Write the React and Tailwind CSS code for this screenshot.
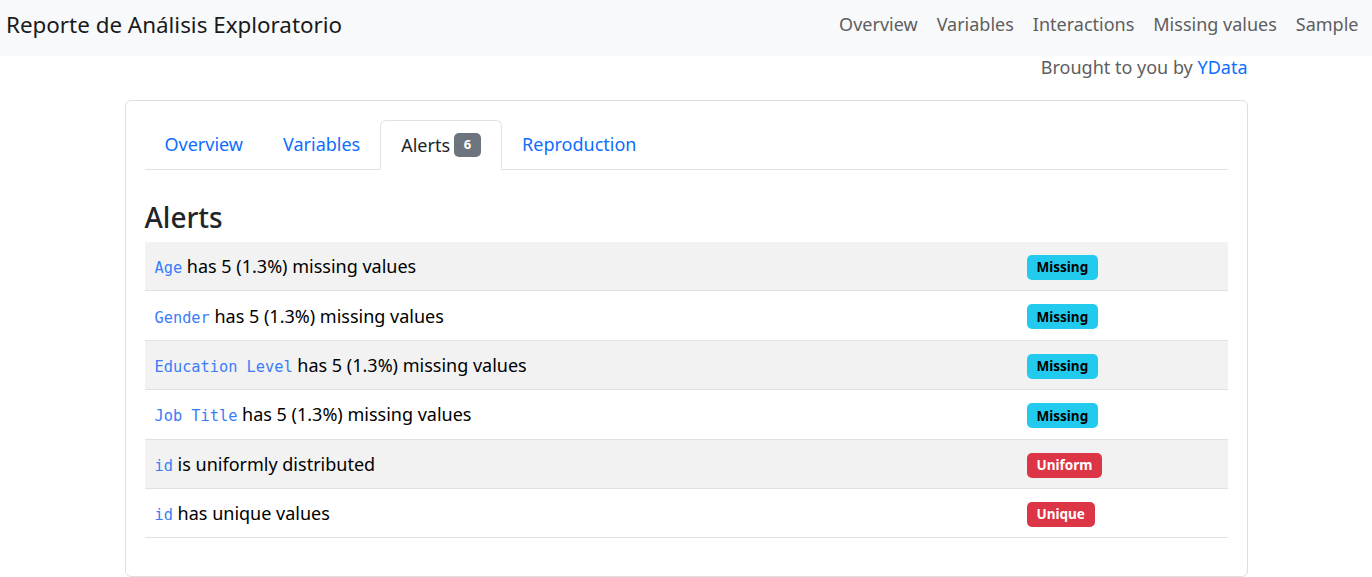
import React from "react";

const rows = [
  { code: "Age", text: "has 5 (1.3%) missing values", badge: "Missing" },
  { code: "Gender", text: "has 5 (1.3%) missing values", badge: "Missing" },
  { code: "Education Level", text: "has 5 (1.3%) missing values", badge: "Missing" },
  { code: "Job Title", text: "has 5 (1.3%) missing values", badge: "Missing" },
  { code: "id", text: "is uniformly distributed", badge: "Uniform" },
  { code: "id", text: "has unique values", badge: "Unique" },
];

export default function App() {
  return (
    <div className="min-h-[577px] bg-white text-[#212529] font-['Noto_Sans',sans-serif]">
      <nav className="h-[56px] bg-[#f8f9fa] flex items-center justify-between pl-[6px] pr-[4px] pb-[10px]">
        <div className="text-[22.4px] text-[#1a1a1a] leading-[30px] pt-[3px]">Reporte de Análisis Exploratorio</div>
        <div className="flex text-[18px] text-[#5e5e5e] leading-[26px] pt-[1px]">
          {["Overview", "Variables", "Interactions", "Missing values", "Sample"].map((l) => (
            <span key={l} className="px-[9.5px]">{l}</span>
          ))}
        </div>
      </nav>
      <div className="w-[1123px] mx-auto">
        <div className="text-right text-[18px] text-[#5e5e5e] h-[44px] leading-[22px]">
          Brought to you by <span className="text-[#0d6efd]">YData</span>
        </div>
        <div className="border border-[#dfdfdf] rounded-[6px] px-[19px] pt-[19px] pb-[38px]">
          <div className="flex border-b border-[#dee2e6] h-[50px] text-[18px]">
            <div className="px-[20px] flex items-center text-[#0d6efd]">Overview</div>
            <div className="px-[20px] flex items-center text-[#0d6efd]">Variables</div>
            <div className="px-[20px] flex items-center text-[#212529] border border-[#dee2e6] border-b-white rounded-t-[6px] -mb-px bg-white">
              Alerts
              <span className="ml-[4px] bg-[#6c757d] text-white text-[13px] font-bold rounded-[5px] w-[27px] h-[24px] flex items-center justify-center">6</span>
            </div>
            <div className="px-[20px] flex items-center text-[#0d6efd]">Reproduction</div>
          </div>
          <h2 className="text-[28px] font-medium mt-[28px] mb-[6px] leading-[38px]">Alerts</h2>
          <div>
            {rows.map((r, i) => (
              <div
                key={i}
                className={`grid grid-cols-[872px_1fr] h-[49.4px] items-center border-b border-[#dee2e6] ${i % 2 === 0 ? "bg-[#f2f2f2]" : "bg-white"}`}
              >
                <div className="pl-[10px] text-[18px] text-black pt-[1px]">
                  <span className="font-['DejaVu_Sans_Mono',monospace] text-[15.3px] text-[#3b7df8]">{r.code}</span>{" "}
                  {r.text}
                </div>
                <div className="pl-[10px] pt-[2px]">
                  <span
                    className={`inline-flex items-center h-[25px] px-[10px] rounded-[5px] text-[13.5px] font-bold ${r.badge === "Missing" ? "bg-[#22cbee] text-black" : "bg-[#dc3545] text-white"}`}
                  >
                    {r.badge}
                  </span>
                </div>
              </div>
            ))}
          </div>
        </div>
      </div>
    </div>
  );
}
